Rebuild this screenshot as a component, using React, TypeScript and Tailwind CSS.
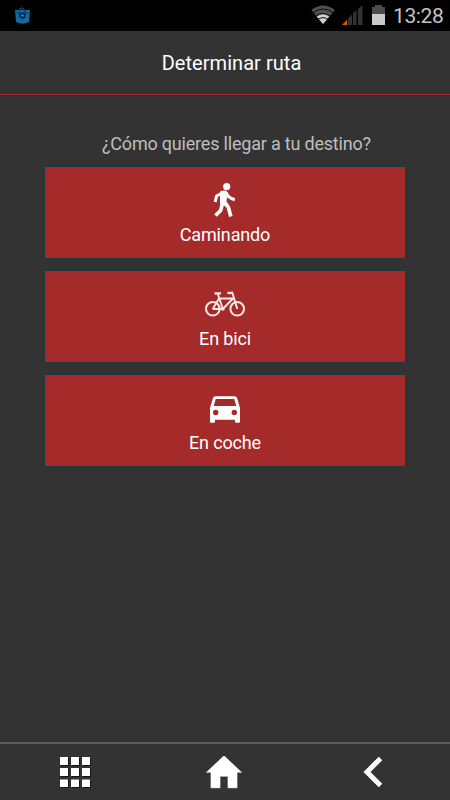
import React from "react";

function StatusBar() {
  return (
    <div className="flex h-[31px] shrink-0 items-start bg-black">
      <svg className="ml-[14px] mt-[7px]" width="17" height="18" viewBox="0 0 17 18">
        <path d="M1 3h15l-1 12q-6.500 3.500-13 0z" fill="#126a9f" />
        <path d="M5 4c1-4 5-4 6 1" fill="none" stroke="#123b6b" strokeWidth="1.5" />
        <path d="M3 6h3M11 6h3" stroke="#092c53" />
        <circle cx="8.500" cy="8.500" r="2.300" fill="#4589b5" stroke="#082450" strokeWidth="2" />
      </svg>
      <svg className="ml-auto mr-[5px] mt-[3px]" width="80" height="24" viewBox="0 0 80 24">
        <path d="M3.300 7Q15 -2 27 7L15 21z" fill="#505050" />
        <path d="M8.800 13.700Q15 9 21.200 13.700L15 21z" fill="#d0d0d0" />
        <path d="M5 9.500Q15 2.500 25 9.500M8 13Q15 8 22 13M10 16.300Q15 13 20 16.300" fill="none" stroke="#0c0c0c" strokeWidth="1" />
        <path d="M34 22l5-5.500V22z" fill="#d6560e" />
        <path d="M40 15.500l4-4V22h-4zM45 10.500l3.500-3.500v15H45zM50 6l4.500-4V22H50z" fill="#333" />
        <path d="M64 4h3V2h7v2h3v7H64z" fill="#4b4b4b" />
        <path d="M64 11h13v11H64z" fill="#cacaca" />
      </svg>
      <span className="mr-[8px] w-[49px] whitespace-nowrap text-right text-[21px] leading-[33px] tracking-[-0.4px] text-[#c4c4c4]">13:28</span>
    </div>
  );
}

function WalkIcon() {
  return (
    <svg width="40" height="40" viewBox="0 0 40 40" fill="none" stroke="white" strokeLinejoin="round">
      <circle cx="21.700" cy="6.600" r="3.600" fill="white" stroke="none" />
      <path d="M15 11.500Q20 9.500 22.500 12L21.500 21.500L24 25L15 24z" fill="white" stroke="none" />
      <path d="M18 12.500L11.500 16L10.200 22" strokeWidth="3" />
      <path d="M21 12.500Q23 18.300 29.800 19.600" strokeWidth="3.200" />
      <path d="M18 22L23.300 27L25.800 36.500" strokeWidth="3.700" />
      <path d="M17.300 24L15.600 30.500L10.500 35.500" strokeWidth="3.700" />
    </svg>
  );
}

function BikeIcon() {
  return (
    <svg width="40" height="40" viewBox="0 0 40 40" fill="none" stroke="#fae8e8" strokeLinejoin="round">
      <g strokeWidth="2">
        <circle cx="7.800" cy="24.800" r="6.800" />
        <circle cx="32.200" cy="24.800" r="6.800" />
      </g>
      <path d="M7.700 25L14 14.500H28L17.800 25H7.700M12.800 10L17.800 25M32.300 25L27.500 9.200" strokeWidth="1.900" />
      <path d="M9.500 9.300H16M22.500 8.500Q25 9.700 28 8.200" strokeWidth="2.300" />
      <circle cx="17.800" cy="25" r="1.800" fill="#fae8e8" stroke="none" />
    </svg>
  );
}

function CarIcon() {
  return (
    <svg width="40" height="40" viewBox="0 0 40 40">
      <path d="M10.500 8.300h19q2 0 2.600 1.700L35 20v13.500q0 1.300-1.300 1.300h-2.500q-1.300 0-1.300-1.300v-1.800H10v1.800q0 1.300-1.300 1.300H6.200q-1.200 0-1.200-1.300V20l3-10q.6-1.700 2.500-1.700z" fill="white" />
      <path d="M10.800 10.900h18.400L31.300 18H8.700z" fill="#a52a2a" />
      <circle cx="10.700" cy="24.500" r="2.700" fill="#a52a2a" />
      <circle cx="29.300" cy="24.500" r="2.700" fill="#a52a2a" />
    </svg>
  );
}

function RouteButton({ icon, label }: { icon: React.ReactNode; label: string }) {
  return (
    <button className="flex h-[91px] w-full flex-col items-center bg-[#a52a2a] pt-[13px] text-[18px] leading-[24px] tracking-[-0.15px] text-white shadow-[0_0_0_1px_#1f363a]">
      {icon}
      <span className="mt-[3px]">{label}</span>
    </button>
  );
}

export default function App() {
  return (
    <div className="flex h-[800px] w-[450px] flex-col overflow-hidden bg-[#333] font-['Roboto',sans-serif]">
      <StatusBar />
      <header className="flex h-[64px] shrink-0 items-center justify-center border-b border-[#a52a2a] pl-[13px] text-[20px] tracking-[0.05px] text-white shadow-[0_1px_0_#193238]">
        Determinar ruta
      </header>
      <main className="flex-1 px-[45px] pt-[36px]">
        <p className="h-[36px] whitespace-nowrap pl-[57px] text-[18px] leading-[26px] tracking-[-0.2px] text-[#bebebe]">¿Cómo quieres llegar a tu destino?</p>
        <div className="flex flex-col gap-[13px]">
          <RouteButton icon={<WalkIcon />} label="Caminando" />
          <RouteButton icon={<BikeIcon />} label="En bici" />
          <RouteButton icon={<CarIcon />} label="En coche" />
        </div>
      </main>
      <nav className="grid h-[58px] shrink-0 grid-cols-3 border-t-2 border-[#5c5c5c] pt-[12px]">
        <button className="flex justify-center">
          <svg width="32" height="32" viewBox="0 0 32 32">
            <path d="M2 2h8v8H2zM13 2h8v8h-8zM24 2h8v8h-8zM2 13h8v8H2zM13 13h8v8h-8zM24 13h8v8h-8zM2 24h8v8H2zM13 24h8v8h-8zM24 24h8v8h-8z" fill="#151515" />
            <path d="M1 1h8v8H1zM12 1h8v8h-8zM23 1h8v8h-8zM1 12h8v8H1zM12 12h8v8h-8zM23 12h8v8h-8zM1 23.500h8V31H1zM12 23.500h8V31h-8zM23 23.500h8V31h-8z" fill="white" />
          </svg>
        </button>
        <button className="flex justify-center">
          <svg width="40" height="36" viewBox="0 0 40 36">
            <path d="M19 -1L37.500 16.500H32.500V32H22.500V20.500H15.500V32H5.500V16.500H.5z" transform="translate(0 .3)" fill="white" stroke="#1b1b1b" strokeWidth=".3" />
          </svg>
        </button>
        <button className="flex justify-center">
          <svg width="32" height="34" viewBox="0 0 32 34">
            <path d="M21.500 2.500L8 16L21.500 29.500" fill="none" stroke="white" strokeWidth="5" />
          </svg>
        </button>
      </nav>
    </div>
  );
}
